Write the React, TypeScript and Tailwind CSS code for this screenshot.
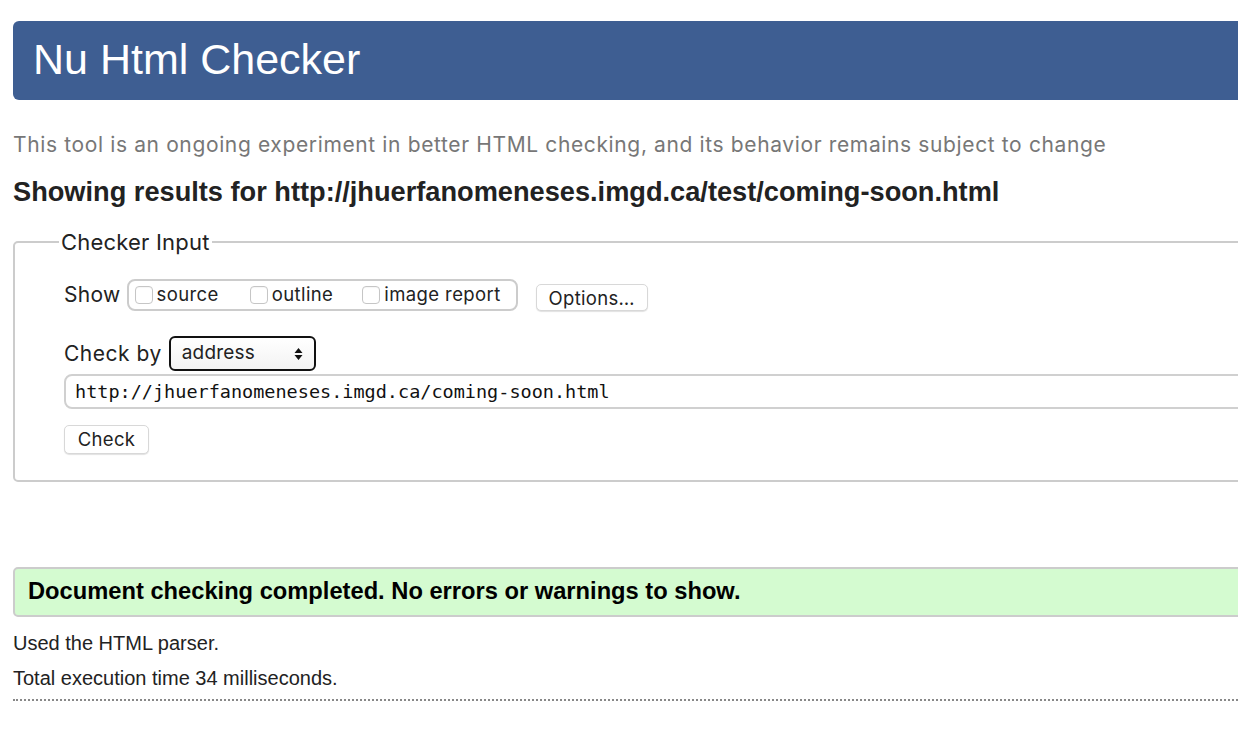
import React from 'react';

const sans = "font-['Liberation_Sans',Arial,sans-serif]";
const ui = "font-['Inter','Liberation_Sans',sans-serif]";

const Box: React.FC<{ label: string; className?: string }> = ({ label, className }) => (
  <label className={`flex items-center ${className ?? ''}`}>
    <span className="w-[18px] h-[18px] rounded-[4px] border border-[#c6c6c6] bg-white shadow-[inset_0_1px_1px_rgba(0,0,0,0.04)]" />
    <span className="ml-[4px] text-[18.5px] tracking-[0.4px] text-[#222]">{label}</span>
  </label>
);

const App: React.FC = () => {
  return (
    <div className="w-full h-[730px] overflow-hidden bg-white">
      <div className="w-[1330px] pl-[13px] pt-[21px]">
        <header className="h-[79px] rounded-[6px] bg-[#3e5e92] flex items-center pl-[20px]">
          <h1 className={`${sans} text-[43px] leading-none text-white pb-[2px]`}>Nu Html Checker</h1>
        </header>

        <p className={`${ui} mt-[33px] text-[21px] leading-[24px] tracking-[0.63px] text-[#777]`}>
          This tool is an ongoing experiment in better HTML checking, and its behavior remains subject to change
        </p>
        <h2 className={`${sans} mt-[19px] text-[27.2px] leading-[32px] font-bold text-[#222]`}>
          Showing results for http://jhuerfanomeneses.imgd.ca/test/coming-soon.html
        </h2>

        <fieldset className={`${ui} mt-[21px] border-2 border-[#cccccc] rounded-[5px] pl-[49px] pb-[26px] text-[#222]`}>
          <legend className="-ml-[5px] px-[2px] text-[22px] leading-[26px] tracking-[0.2px]">Checker Input</legend>

          <div className="mt-[24px] flex items-center">
            <span className="text-[21px] tracking-[0.3px] mr-[6px]">Show</span>
            <div className="h-[32px] flex items-center border-2 border-[#cccccc] rounded-[8px] pl-[6px] pr-[15px]">
              <Box label="source" />
              <Box label="outline" className="ml-[31px]" />
              <Box label="image report" className="ml-[29px]" />
            </div>
            <button className="ml-[18px] mt-[4px] h-[27px] w-[112px] rounded-[5px] bg-white border border-[#d8d8d8] shadow-[0_1px_1px_rgba(0,0,0,0.12)] text-[18.5px] tracking-[0.3px] text-[#222]">
              Options…
            </button>
          </div>

          <div className="mt-[25px] flex items-center">
            <span className="text-[21px] tracking-[0.5px] mr-[7px]">Check by</span>
            <div className="w-[147px] h-[35px] flex items-center justify-between border-2 border-[#111] rounded-[6px] pl-[11px] pr-[11px] bg-gradient-to-b from-white to-[#f3f3f3]">
              <span className="text-[19px] tracking-[0.2px]">address</span>
              <svg width="9" height="14" viewBox="0 0 9 14">
                <path d="M4.5 1 L8.5 6 L0.5 6 Z M4.5 13 L8.5 8 L0.5 8 Z" fill="#111" />
              </svg>
            </div>
          </div>

          <div className="mt-[3px] h-[35px] flex items-center border-2 border-[#d0d0d0] rounded-[8px] pl-[9px] font-['DejaVu_Sans_Mono',monospace] text-[18.5px] text-[#111]">
            http://jhuerfanomeneses.imgd.ca/coming-soon.html
          </div>

          <button className="mt-[16px] h-[29px] w-[85px] rounded-[5px] bg-white border border-[#d8d8d8] shadow-[0_1px_1px_rgba(0,0,0,0.12)] text-[18.5px] tracking-[0.3px] text-[#222]">
            Check
          </button>
        </fieldset>

        <div className={`${sans} mt-[85px] h-[50px] flex items-center border-2 border-[#cccccc] rounded-[5px] bg-[#d4fbd0] pl-[13px] text-[23.7px] font-bold text-black`}>
          Document checking completed. No errors or warnings to show.
        </div>

        <p className={`${sans} mt-[14px] text-[20px] leading-[24px] text-[#222]`}>Used the HTML parser.</p>
        <p className={`${sans} mt-[11px] text-[20px] leading-[24px] text-[#222]`}>Total execution time 34 milliseconds.</p>
        <div className="mt-[9px] border-t-2 border-dotted border-[#888]" />
      </div>
    </div>
  );
};

export default App;
